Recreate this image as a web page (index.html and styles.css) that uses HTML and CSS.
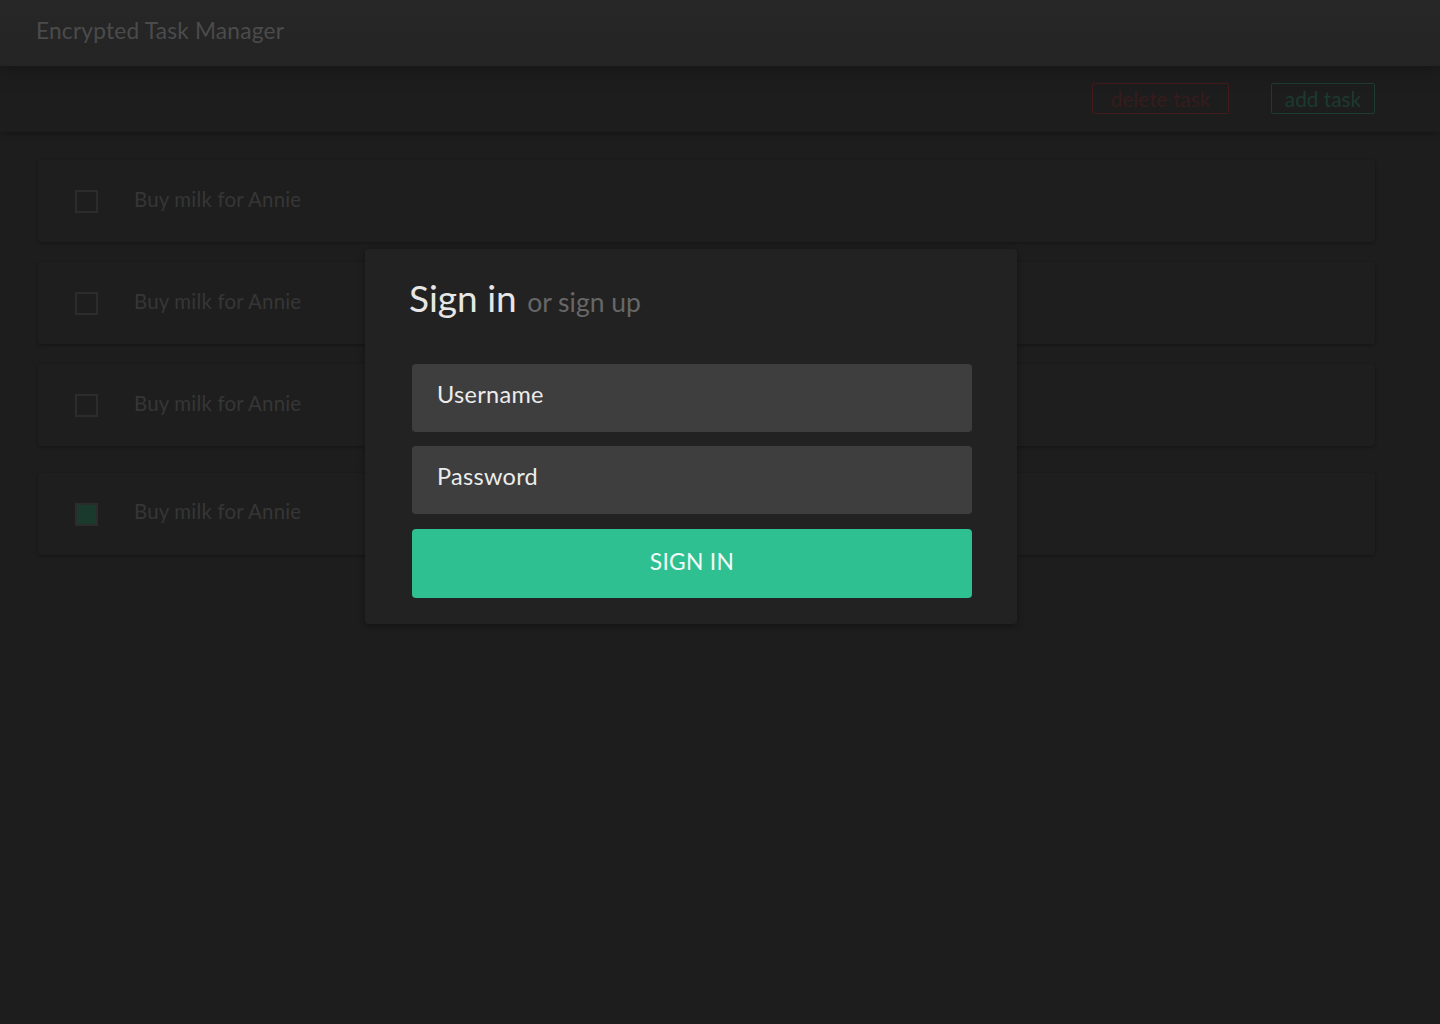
FILE: index.html
```html
<!DOCTYPE html>
<html>
<head>
<meta charset="utf-8">
<title>Encrypted Task Manager</title>
<link rel="stylesheet" href="styles.css">
</head>
<body>
<header class="topbar">
  <h1 class="app-title">Encrypted Task Manager</h1>
</header>
<div class="toolbar">
  <button class="tool-btn tool-delete">delete task</button>
  <button class="tool-btn tool-add">add task</button>
</div>
<main class="tasks">
  <div class="task"><span class="check"></span><span class="task-text">Buy milk for Annie</span></div>
  <div class="task"><span class="check"></span><span class="task-text">Buy milk for Annie</span></div>
  <div class="task"><span class="check"></span><span class="task-text">Buy milk for Annie</span></div>
  <div class="task task-done"><span class="check check-on"></span><span class="task-text">Buy milk for Annie</span></div>
</main>
<div class="overlay">
  <form class="modal">
    <h2 class="modal-title">Sign in <span class="modal-sub">or sign up</span></h2>
    <div class="field">Username</div>
    <div class="field">Password</div>
    <div class="submit">SIGN IN</div>
  </form>
</div>
</body>
</html>
```
FILE: styles.css
```css
* { box-sizing: border-box; }
html, body { margin: 0; padding: 0; }
body {
  width: 1440px;
  height: 1024px;
  background: #1d1d1d;
  font-family: Lato, "Noto Sans", sans-serif;
  position: relative;
  overflow: hidden;
}
.topbar {
  height: 66px;
  background: linear-gradient(#272727, #242424);
  display: flex;
  align-items: center;
  padding-left: 36px;
  padding-bottom: 6px;
  box-shadow: 0 0 24px rgba(0,0,0,0.35);
  position: relative;
  z-index: 2;
}
.app-title {
  margin: 0;
  font-weight: 400;
  font-size: 22.7px;
  color: #4b4b4b;
  letter-spacing: 0.2px;
}
.toolbar {
  height: 66px;
  display: flex;
  justify-content: flex-end;
  align-items: center;
  gap: 42px;
  padding-right: 65px;
  padding-bottom: 2px;
  background: #1d1d1d;
  box-shadow: 0 2px 6px rgba(0,0,0,0.25);
  position: relative;
  z-index: 1;
}
.tool-btn {
  font-family: Lato, "Noto Sans", sans-serif;
  background: transparent;
  font-size: 20.8px;
  height: 31px;
  border-radius: 2px;
  padding: 0;
  line-height: 27px;
}
.tool-delete { width: 137px; border: 1px solid #421b1b; color: #361c1c; }
.tool-add { width: 104px; border: 1px solid #1d3d31; color: #1c3a2f; }
.tasks {
  padding: 28px 65px 0 38px;
  display: flex;
  flex-direction: column;
  gap: 20px;
}
.task {
  height: 82px;
  background: #1e1e1e;
  border-radius: 3px;
  box-shadow: 0 1px 3px rgba(0,0,0,0.3);
  display: flex;
  align-items: center;
  padding-left: 37px;
}
.task-done { margin-top: 7px; }
.check {
  width: 23px;
  height: 23px;
  border: 2px solid #2c2c2c;
  margin-right: 36px;
  flex: none;
}
.check-on { background: #1b3a2e; }
.task-text {
  font-size: 20.4px;
  color: #363636;
  letter-spacing: 0.2px;
  padding-bottom: 4px;
}
.task-done .task-text { padding-bottom: 6px; }
.overlay {
  position: absolute;
  inset: 0;
  z-index: 5;
}
.modal {
  position: absolute;
  left: 365px;
  top: 249px;
  width: 652px;
  height: 375px;
  background: #222222;
  border-radius: 4px;
  box-shadow: 0 2px 6px rgba(0,0,0,0.35);
  padding: 26px 45px 0 47px;
}
.modal-title {
  margin: 0 0 39px -3px;
  font-weight: 400;
  font-size: 37px;
  line-height: 46px;
  color: #e6e6e6;
}
.modal-sub {
  font-size: 26.5px;
  color: #676767;
  margin-left: 1px;
}
.field {
  height: 68px;
  background: #3e3e3e;
  border-radius: 4px;
  margin-bottom: 14px;
  padding: 16px 0 0 25px;
  font-size: 23.5px;
  color: #ececec;
  letter-spacing: 0.3px;
}
.submit {
  margin-top: 15px;
  height: 69px;
  background: #2ec091;
  border-radius: 4px;
  display: flex;
  align-items: center;
  justify-content: center;
  font-size: 22.8px;
  color: #f2fbf7;
  letter-spacing: 0.3px;
  padding-bottom: 5px;
}
```
